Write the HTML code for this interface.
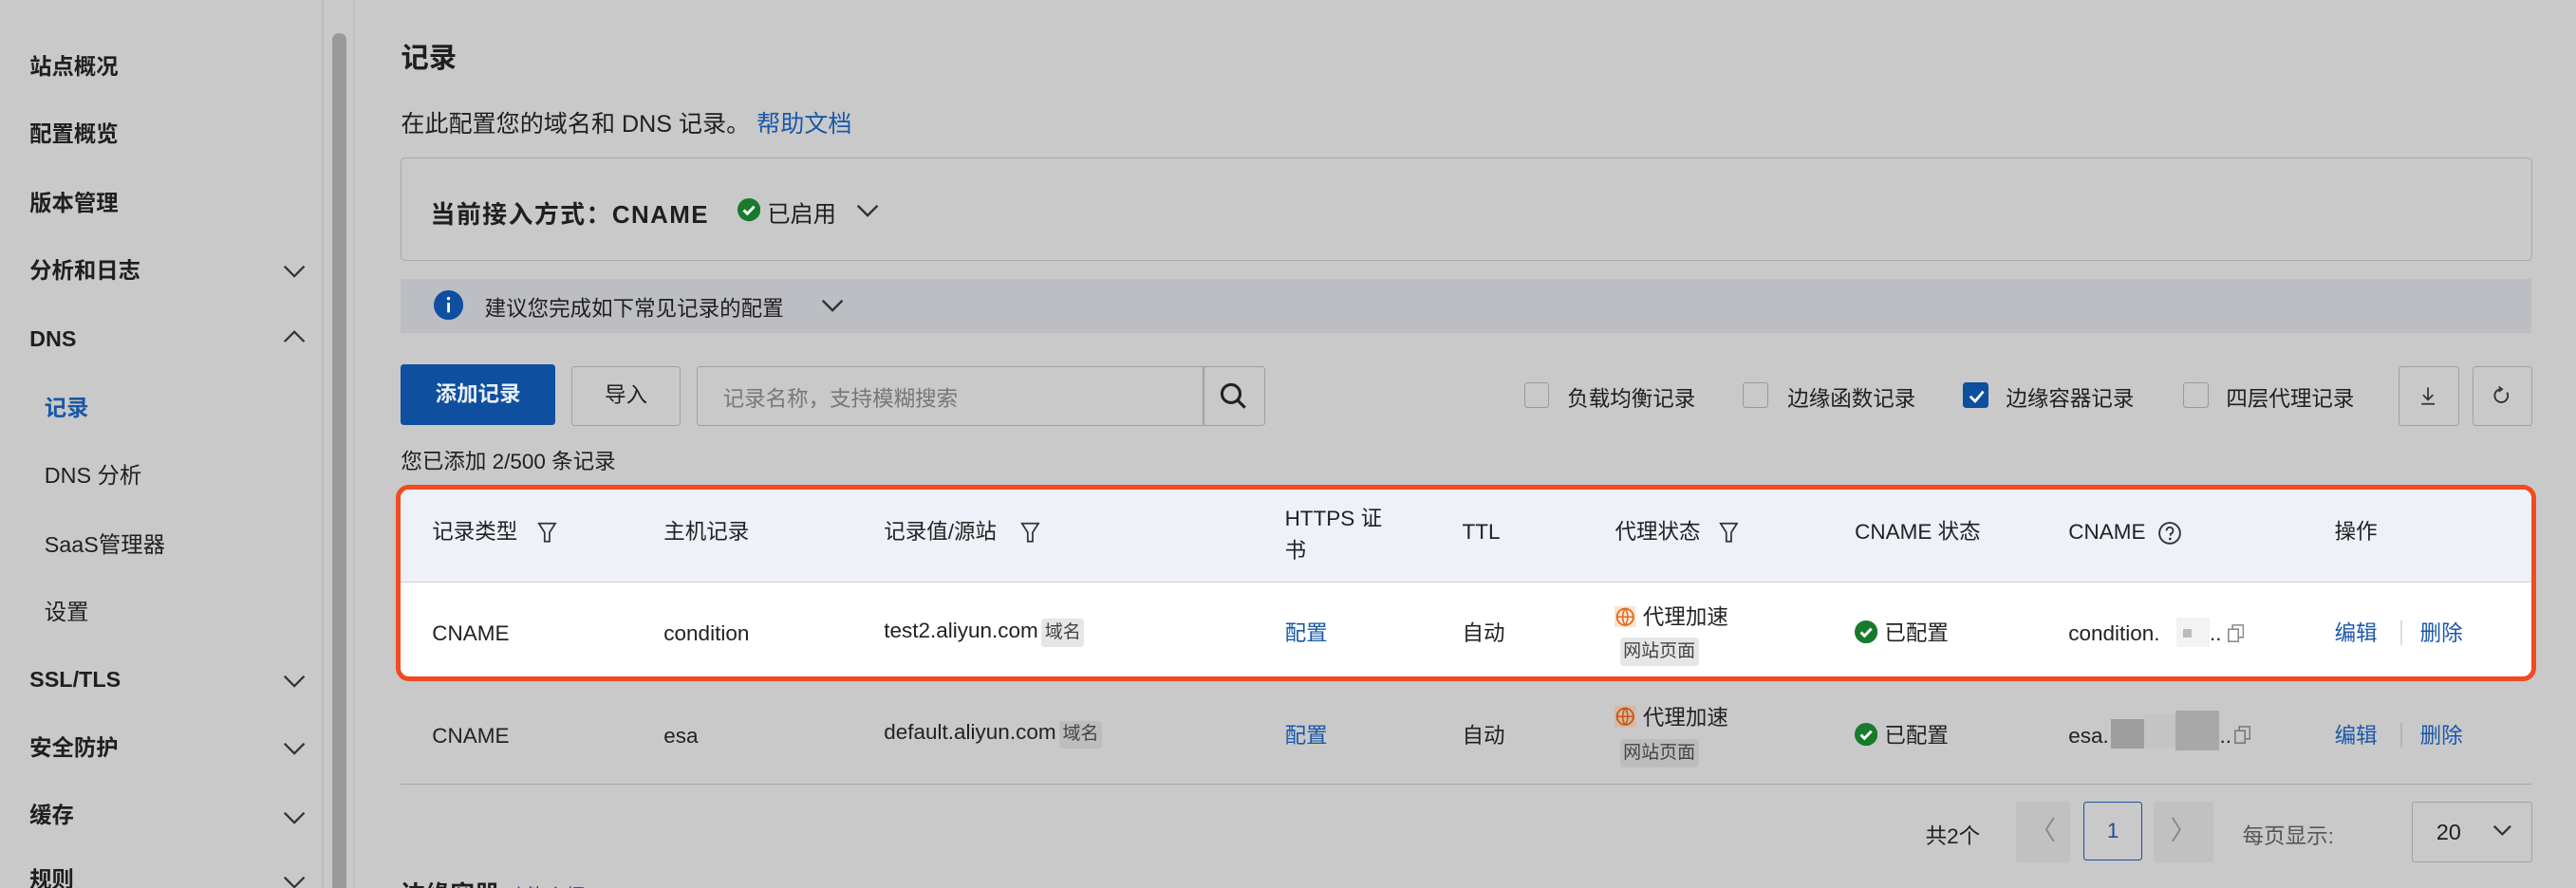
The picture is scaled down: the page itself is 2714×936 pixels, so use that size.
<!DOCTYPE html>
<html><head><meta charset="utf-8"><style>
html,body{margin:0;padding:0;background:#c9c9c9;width:2714px;height:936px;overflow:hidden}
#r{zoom:1.7309;position:relative;width:1568px;height:541px;font-family:"Liberation Sans","Noto Sans CJK SC",sans-serif;color:#1f1f1f;font-size:13px}
.a{position:absolute;white-space:nowrap}
.b{font-weight:bold}
.nav{left:18px;font-size:13.5px;font-weight:bold;line-height:16px}
.sub{left:27px;font-size:13.5px;line-height:16px}
.chev{position:absolute;left:172px;width:14px;height:8px}
.blue{color:#1a58a8 !important}
.cb{position:absolute;width:14px;height:14px;border:1px solid #9a9a9a;border-radius:2px;background:#c9c9c9}
.th{top:316px;font-size:13px;line-height:16px;color:#222}
.td{font-size:13px;line-height:16px;color:#222}
.tag{display:inline-block;background:#e6e6e6;color:#444;font-size:11px;padding:2px 2px;border-radius:2px;margin-left:2px;line-height:13px}
.tag2{background:#bdbdbd}
</style></head><body><div id="r">
<div class="a nav" style="top:33px">站点概况</div>
<div class="a nav" style="top:74px">配置概览</div>
<div class="a nav" style="top:116px">版本管理</div>
<div class="a nav" style="top:157px">分析和日志</div>
<div class="a nav" style="top:199px">DNS</div>
<div class="a sub blue b" style="top:241px">记录</div>
<div class="a sub" style="top:282px">DNS 分析</div>
<div class="a sub" style="top:324px">SaaS管理器</div>
<div class="a sub" style="top:365px">设置</div>
<div class="a nav" style="top:406px">SSL/TLS</div>
<div class="a nav" style="top:448px">安全防护</div>
<div class="a nav" style="top:489px">缓存</div>
<div class="a nav" style="top:528px">规则</div>
<svg class="chev" style="top:161px" viewBox="0 0 14 8"><path d="M1 1l6 6 6-6" fill="none" stroke="#333" stroke-width="1.3"/></svg>
<svg class="chev" style="top:201px" viewBox="0 0 14 8"><path d="M1 7l6-6 6 6" fill="none" stroke="#333" stroke-width="1.3"/></svg>
<svg class="chev" style="top:411px" viewBox="0 0 14 8"><path d="M1 1l6 6 6-6" fill="none" stroke="#333" stroke-width="1.3"/></svg>
<svg class="chev" style="top:452px" viewBox="0 0 14 8"><path d="M1 1l6 6 6-6" fill="none" stroke="#333" stroke-width="1.3"/></svg>
<svg class="chev" style="top:494px" viewBox="0 0 14 8"><path d="M1 1l6 6 6-6" fill="none" stroke="#333" stroke-width="1.3"/></svg>
<svg class="chev" style="top:533px" viewBox="0 0 14 8"><path d="M1 1l6 6 6-6" fill="none" stroke="#333" stroke-width="1.3"/></svg>
<div class="a" style="left:196px;top:0;width:1px;height:541px;background:#bbb"></div>
<div class="a" style="left:202px;top:20px;width:9px;height:530px;background:#9a9a9a;border-radius:4px"></div>
<div class="a" style="left:215px;top:0;width:1px;height:541px;background:#c0c0c0"></div>
<div class="a b" style="left:244px;top:22px;font-size:17px">记录</div>
<div class="a" style="left:244px;top:64px;font-size:14.5px">在此配置您的域名和 DNS 记录。 <span class="blue">帮助文档</span></div>
<div class="a" style="left:244px;top:96px;width:1296px;height:62px;border:1px solid #a9a9a9;border-radius:3px"></div>
<div class="a b" style="left:262px;top:119px;font-size:15px;letter-spacing:.8px">当前接入方式：CNAME</div>
<svg class="a" style="left:449px;top:121px" width="14" height="14" viewBox="0 0 14 14"><circle cx="7" cy="7" r="7" fill="#177a2c"/><path d="M3.8 7.2l2.2 2.2 4.2-4.4" fill="none" stroke="#fff" stroke-width="1.7"/></svg>
<div class="a" style="left:467px;top:119px;font-size:14px">已启用</div>
<svg class="a" style="left:521px;top:124px" width="14" height="9" viewBox="0 0 14 9"><path d="M1 1l6 6 6-6" fill="none" stroke="#333" stroke-width="1.4"/></svg>
<div class="a" style="left:244px;top:170px;width:1297px;height:33px;background:#bcbec3"></div>
<svg class="a" style="left:264px;top:177px" width="18" height="18" viewBox="0 0 18 18"><circle cx="9" cy="9" r="9" fill="#0f4ea0"/><rect x="8.2" y="7.5" width="1.6" height="6" fill="#fff"/><circle cx="9" cy="5" r="1" fill="#fff"/></svg>
<div class="a" style="left:295px;top:178px;font-size:13px">建议您完成如下常见记录的配置</div>
<svg class="a" style="left:500px;top:182px" width="14" height="9" viewBox="0 0 14 9"><path d="M1 1l6 6 6-6" fill="none" stroke="#333" stroke-width="1.4"/></svg>
<div class="a b" style="left:244px;top:222px;width:94px;height:37px;background:#0e4f9f;border-radius:2px;color:#e8eef6;text-align:center;line-height:37px;font-size:13px">添加记录</div>
<div class="a" style="left:348px;top:223px;width:65px;height:35px;border:1px solid #a0a0a0;border-radius:2px;text-align:center;line-height:35px;font-size:13px">导入</div>
<div class="a" style="left:424px;top:223px;width:345px;height:35px;border:1px solid #a0a0a0;border-radius:2px"></div>
<div class="a" style="left:440px;top:233px;font-size:13px;color:#777">记录名称，支持模糊搜索</div>
<div class="a" style="left:732px;top:223px;width:1px;height:36px;background:#a0a0a0"></div>
<svg class="a" style="left:742px;top:232px" width="18" height="18" viewBox="0 0 18 18"><circle cx="7.5" cy="7.5" r="5.5" fill="none" stroke="#222" stroke-width="1.8"/><path d="M11.5 11.5l4.5 4.5" stroke="#222" stroke-width="1.8"/></svg>
<div class="cb" style="left:928px;top:233px"></div><div class="a" style="left:954px;top:233px;font-size:13px">负载均衡记录</div>
<div class="cb" style="left:1061px;top:233px"></div><div class="a" style="left:1088px;top:233px;font-size:13px">边缘函数记录</div>
<div class="cb" style="left:1195px;top:233px;background:#0e4f9f;border-color:#0e4f9f"></div>
<svg class="a" style="left:1198px;top:237px" width="10" height="9" viewBox="0 0 10 9"><path d="M1 4.5l3 3 5-6" fill="none" stroke="#fff" stroke-width="1.6"/></svg>
<div class="a" style="left:1221px;top:233px;font-size:13px">边缘容器记录</div>
<div class="cb" style="left:1329px;top:233px"></div><div class="a" style="left:1355px;top:233px;font-size:13px">四层代理记录</div>
<div class="a" style="left:1460px;top:223px;width:36px;height:35px;border:1px solid #a0a0a0;border-radius:2px"></div>
<svg class="a" style="left:1471px;top:234px" width="14" height="14" viewBox="0 0 14 14"><path d="M7 2v7M4 6.5l3 3 3-3M3 12h8" fill="none" stroke="#333" stroke-width="1"/></svg>
<div class="a" style="left:1505px;top:223px;width:35px;height:35px;border:1px solid #a0a0a0;border-radius:2px"></div>
<svg class="a" style="left:1516px;top:234px" width="14" height="14" viewBox="0 0 14 14"><path d="M10 5A4 4 0 1 1 6 3" fill="none" stroke="#333" stroke-width="1.1"/><path d="M5 1.5l2 1.5-2 1.5" fill="none" stroke="#333" stroke-width="1"/></svg>
<div class="a" style="left:244px;top:271px;font-size:13px">您已添加 2/500 条记录</div>
<div class="a" style="left:241px;top:295px;width:1297px;height:114px;border:3px solid #f24a22;border-radius:8px;background:#fff;overflow:hidden">
 <div style="position:absolute;left:0;top:0;width:100%;height:56px;background:#eef1f8;border-bottom:1px solid #cfcfcf"></div>
</div>
<div class="a th" style="left:263px">记录类型</div>
<svg class="a" style="left:327px;top:318px" width="12" height="14" viewBox="0 0 12 14"><path d="M1 1h10L7.5 6.5V12h-3V6.5z" fill="none" stroke="#333" stroke-width="1"/></svg>
<div class="a th" style="left:404px">主机记录</div>
<div class="a th" style="left:538px">记录值/源站</div>
<svg class="a" style="left:621px;top:318px" width="12" height="14" viewBox="0 0 12 14"><path d="M1 1h10L7.5 6.5V12h-3V6.5z" fill="none" stroke="#333" stroke-width="1"/></svg>
<div class="a th" style="left:782px;top:306px;line-height:20px">HTTPS 证<br>书</div>
<div class="a th" style="left:890px">TTL</div>
<div class="a th" style="left:983px">代理状态</div>
<svg class="a" style="left:1046px;top:318px" width="12" height="14" viewBox="0 0 12 14"><path d="M1 1h10L7.5 6.5V12h-3V6.5z" fill="none" stroke="#333" stroke-width="1"/></svg>
<div class="a th" style="left:1129px">CNAME 状态</div>
<div class="a th" style="left:1259px">CNAME</div>
<svg class="a" style="left:1313px;top:317px" width="15" height="15" viewBox="0 0 15 15"><circle cx="7.5" cy="7.5" r="6.3" fill="none" stroke="#333" stroke-width="1.1"/><path d="M5.5 6a2 2 0 1 1 2.5 1.9V9" fill="none" stroke="#333" stroke-width="1.1"/><circle cx="7.7" cy="11" r=".8" fill="#333"/></svg>
<div class="a th" style="left:1421px">操作</div>
<div class="a td" style="left:263px;top:378px">CNAME</div>
<div class="a td" style="left:404px;top:378px">condition</div>
<div class="a td" style="left:538px;top:376px">test2.aliyun.com<span class="tag">域名</span></div>
<div class="a td blue" style="left:782px;top:378px">配置</div>
<div class="a td" style="left:890px;top:378px">自动</div>
<svg class="a" style="left:983px;top:369px" width="13" height="13" viewBox="0 0 13 13"><rect width="13" height="13" fill="#fbe6d6"/><circle cx="6.5" cy="6.5" r="5" fill="none" stroke="#e56b1f" stroke-width="1.1"/><path d="M1.5 6.5h10M6.5 1.5c-2 2.5-2 7.5 0 10M6.5 1.5c2 2.5 2 7.5 0 10" fill="none" stroke="#e56b1f" stroke-width=".9"/></svg>
<div class="a td" style="left:1000px;top:368px">代理加速</div>
<div class="a" style="left:986px;top:388px"><span class="tag" style="margin:0">网站页面</span></div>
<svg class="a" style="left:1129px;top:378px" width="14" height="14" viewBox="0 0 14 14"><circle cx="7" cy="7" r="7" fill="#177a2c"/><path d="M3.8 7.2l2.2 2.2 4.2-4.4" fill="none" stroke="#fff" stroke-width="1.7"/></svg>
<div class="a td" style="left:1147px;top:378px">已配置</div>
<div class="a td" style="left:1259px;top:378px">condition.</div>
<div class="a" style="left:1325px;top:376px;width:20px;height:18px;background:#f3f3f3"></div>
<div class="a" style="left:1329px;top:383px;width:5px;height:5px;background:#bbb"></div>
<div class="a td" style="left:1345px;top:378px">..</div>
<svg class="a" style="left:1356px;top:380px" width="10" height="11" viewBox="0 0 10 11"><rect x=".5" y="3" width="6" height="7.5" fill="none" stroke="#888" stroke-width=".9"/><path d="M3 3V.5h6.5V8H7" fill="none" stroke="#888" stroke-width=".9"/></svg>
<div class="a td blue" style="left:1421px;top:378px">编辑</div>
<div class="a" style="left:1461px;top:378px;width:1px;height:15px;background:#ddd"></div>
<div class="a td blue" style="left:1473px;top:378px">删除</div>
<div class="a td" style="left:263px;top:440px">CNAME</div>
<div class="a td" style="left:404px;top:440px">esa</div>
<div class="a td" style="left:538px;top:438px">default.aliyun.com<span class="tag tag2">域名</span></div>
<div class="a td blue" style="left:782px;top:440px">配置</div>
<div class="a td" style="left:890px;top:440px">自动</div>
<svg class="a" style="left:983px;top:430px" width="13" height="13" viewBox="0 0 13 13"><rect width="13" height="13" fill="#d6b8a5"/><circle cx="6.5" cy="6.5" r="5" fill="none" stroke="#c45a18" stroke-width="1.1"/><path d="M1.5 6.5h10M6.5 1.5c-2 2.5-2 7.5 0 10M6.5 1.5c2 2.5 2 7.5 0 10" fill="none" stroke="#c45a18" stroke-width=".9"/></svg>
<div class="a td" style="left:1000px;top:429px">代理加速</div>
<div class="a" style="left:986px;top:450px"><span class="tag tag2" style="margin:0">网站页面</span></div>
<svg class="a" style="left:1129px;top:440px" width="14" height="14" viewBox="0 0 14 14"><circle cx="7" cy="7" r="7" fill="#177a2c"/><path d="M3.8 7.2l2.2 2.2 4.2-4.4" fill="none" stroke="#fff" stroke-width="1.7"/></svg>
<div class="a td" style="left:1147px;top:440px">已配置</div>
<div class="a td" style="left:1259px;top:440px">esa.</div>
<div class="a" style="left:1285px;top:438px;width:20px;height:18px;background:#9e9e9e"></div>
<div class="a" style="left:1305px;top:435px;width:20px;height:20px;background:#c4c4c4"></div>
<div class="a" style="left:1324px;top:433px;width:27px;height:24px;background:#a8a8a8"></div>
<div class="a td" style="left:1351px;top:440px">..</div>
<svg class="a" style="left:1360px;top:442px" width="10" height="11" viewBox="0 0 10 11"><rect x=".5" y="3" width="6" height="7.5" fill="none" stroke="#777" stroke-width=".9"/><path d="M3 3V.5h6.5V8H7" fill="none" stroke="#777" stroke-width=".9"/></svg>
<div class="a td blue" style="left:1421px;top:440px">编辑</div>
<div class="a" style="left:1461px;top:440px;width:1px;height:15px;background:#b5b5b5"></div>
<div class="a td blue" style="left:1473px;top:440px">删除</div>
<div class="a" style="left:244px;top:477px;width:1297px;height:1px;background:#a6a6a6"></div>
<div class="a" style="left:1172px;top:499px;font-size:13px">共2个</div>
<div class="a" style="left:1227px;top:488px;width:33px;height:37px;background:#c1c1c1;border-radius:2px;color:#888;text-align:center;line-height:36px;font-size:16px">〈</div>
<div class="a" style="left:1268px;top:488px;width:35px;height:35px;border:1px solid #1a4f9c;border-radius:2px;color:#1a4f9c;text-align:center;line-height:35px;font-size:13px">1</div>
<div class="a" style="left:1311px;top:488px;width:36px;height:37px;background:#c1c1c1;border-radius:2px;color:#888;text-align:center;line-height:36px;font-size:16px">〉</div>
<div class="a" style="left:1365px;top:499px;font-size:13px;color:#555">每页显示:</div>
<div class="a" style="left:1468px;top:488px;width:72px;height:36px;border:1px solid #a0a0a0;border-radius:2px"></div>
<div class="a" style="left:1483px;top:499px;font-size:13.5px">20</div>
<svg class="a" style="left:1517px;top:502px" width="12" height="8" viewBox="0 0 12 8"><path d="M1 1l5 5 5-5" fill="none" stroke="#333" stroke-width="1.3"/></svg>
<div class="a b" style="left:244px;top:533px;font-size:15px">边缘容器 <span style="font-weight:normal;font-size:12px;color:#446">功能介绍</span></div>
</div></body></html>
